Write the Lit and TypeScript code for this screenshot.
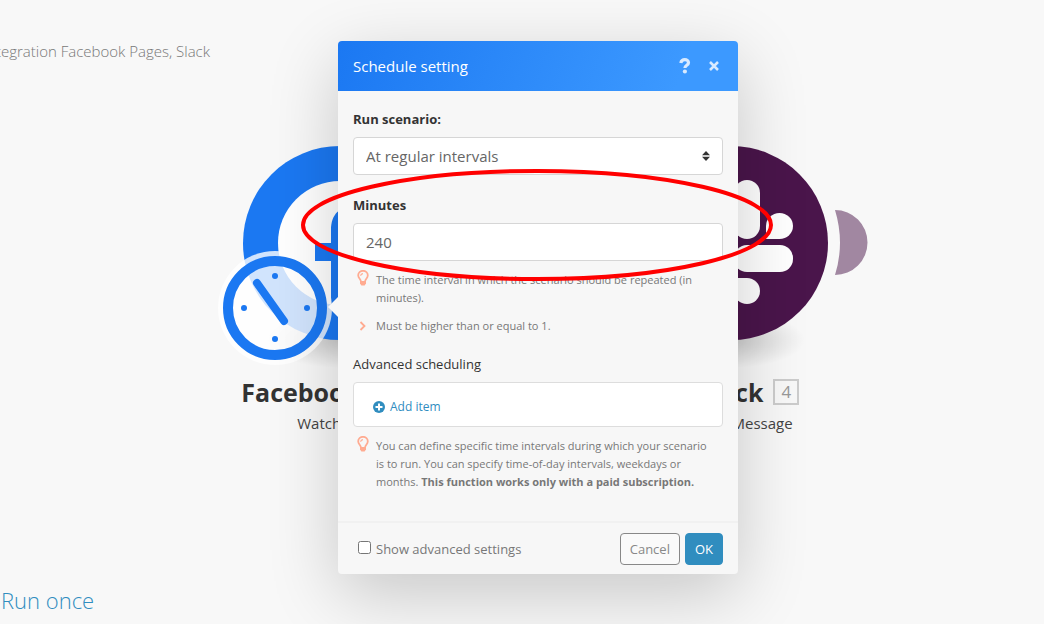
import { LitElement, html, css, svg } from "lit";
import { customElement, state } from "lit/decorators.js";

const bulb = svg`<svg class="bulb" viewBox="0 0 12 16" width="12" height="16" aria-hidden="true">
  <path d="M3.800 11C3.600 9 1.200 8.200 1.200 5.300A4.800 4.500 0 0 1 10.800 5.300C10.800 8.200 8.400 9 8.200 11" fill="none" stroke="currentColor" stroke-width="1.800"/>
  <path d="M3.600 5.800A2.500 2.500 0 0 1 6 3.600" fill="none" stroke="currentColor" stroke-width="1.200"/>
  <path d="M3 11h6v2.400L7.600 15.400H4.400L3 13.400Z" fill="currentColor"/>
</svg>`;

@customElement("scenario-canvas")
export class ScenarioCanvas extends LitElement {
  static styles = css`
    :host {
      display: block;
      position: absolute;
      inset: 0;
      overflow: hidden;
    }
    .node {
      position: absolute;
      top: 146px;
      width: 280px;
      display: flex;
      flex-direction: column;
      align-items: center;
      color: #333;
    }
    .facebook {
      left: calc(50% - 322px);
    }
    .slack {
      left: calc(50% + 69px);
    }
    .art {
      display: block;
      width: 280px;
      height: 229px;
      overflow: visible;
    }
    .name {
      display: flex;
      align-items: center;
      gap: 10px;
      margin: 0;
      font-size: 25px;
      line-height: 34px;
      font-weight: 700;
      white-space: nowrap;
    }
    .count {
      box-sizing: border-box;
      width: 26px;
      height: 26px;
      margin-right: -36px;
      border: 2px solid #ccc;
      color: #999;
      font-size: 17px;
      line-height: 22px;
      font-weight: 400;
      text-align: center;
    }
    .action {
      margin: 2px 0 0;
      font-size: 15px;
      line-height: 24px;
      color: #444;
      white-space: nowrap;
    }
  `;

  render() {
    return html`
      <section class="node facebook">
        <svg class="art" viewBox="0 0 280 229" aria-hidden="true">
          <defs>
            <radialGradient id="shade">
              <stop offset="0" stop-color="#000" stop-opacity=".18" />
              <stop offset="1" stop-color="#000" stop-opacity="0" />
            </radialGradient>
          </defs>
          <ellipse cx="140" cy="194" rx="74" ry="28" fill="url(#shade)" />
          <circle cx="140" cy="97" r="97" fill="#1b78f2" />
          <circle cx="140" cy="97" r="62" fill="#fff" />
          <path d="M115 97h16V84c0-16 9-24 24-24l14 1v16h-8c-8 0-11 4-11 10v10h18l-3 18h-15v46h-19v-46h-16z" fill="#1b78f2" />
          <circle cx="75" cy="162" r="57" fill="#fff" fill-opacity=".8" />
          <circle cx="75" cy="162" r="47" fill="none" stroke="#1b78f2" stroke-width="10" />
          <path d="M57 137 84 175" stroke="#1b78f2" stroke-width="8" stroke-linecap="round" />
          <g fill="#1b78f2">
            <circle cx="75" cy="130" r="3" /><circle cx="75" cy="193" r="3" />
            <circle cx="44" cy="162" r="3" /><circle cx="107" cy="162" r="3" />
          </g>
        </svg>
        <h2 class="name">Facebook Pages</h2>
        <p class="action">Watch Posts</p>
      </section>
      <section class="node slack">
        <svg class="art" viewBox="0 0 280 229" aria-hidden="true">
          <defs>
            <radialGradient id="shade">
              <stop offset="0" stop-color="#000" stop-opacity=".18" />
              <stop offset="1" stop-color="#000" stop-opacity="0" />
            </radialGradient>
          </defs>
          <ellipse cx="140" cy="194" rx="74" ry="28" fill="url(#shade)" />
          <circle cx="140" cy="97" r="97" fill="#4a154b" />
          <g fill="#fff">
            <rect x="143" y="34" width="26" height="59" rx="13" />
            <path d="M175 93V80a13.500 13 0 1 1 13.500 13z" />
            <rect x="143" y="99" width="59" height="27" rx="13" />
            <path d="M143 132h13a13 13 0 1 1-13 13z" />
            <rect x="111" y="99" width="26" height="59" rx="13" />
            <path d="M105 99v13a13 13 0 1 1-13-13z" />
            <rect x="78" y="67" width="59" height="26" rx="13" />
            <path d="M137 60h-13a13 13 0 1 1 13-13z" />
          </g>
          <path d="M244 64A32.500 32.500 0 0 1 244 129Q254 97 244 64Z" fill="#a187a1" />
        </svg>
        <h2 class="name">Slack <span class="count">4</span></h2>
        <p class="action">Create a Message</p>
      </section>
    `;
  }
}

@customElement("schedule-dialog")
export class ScheduleDialog extends LitElement {
  @state() private advanced = false;

  static styles = css`
    :host {
      display: block;
      position: relative;
      width: 400px;
      color: #333;
      background: #f7f7f7;
      border-radius: 4px;
      box-shadow: 0 20px 70px rgba(0, 0, 0, 0.2);
    }
    .arrow {
      position: absolute;
      left: -10px;
      top: 256px;
      width: 10px;
      height: 20px;
      background: #f7f7f7;
      clip-path: polygon(0 50%, 100% 0, 100% 100%);
    }
    .head {
      display: flex;
      align-items: center;
      height: 50px;
      padding: 0 15px;
      color: #fff;
      border-radius: 4px 4px 0 0;
      background: linear-gradient(110deg, #1b78f2, #3c99ff 85%);
    }
    .title {
      flex: 1;
      margin: 0;
      font-size: 15px;
      line-height: 24px;
      font-weight: 400;
    }
    .tool {
      width: 29px;
      height: 30px;
      padding: 0;
      border: 0;
      background: none;
      color: #d8eaff;
    }
    .tools {
      display: flex;
      margin-right: -5px;
    }
    .tool svg {
      display: block;
      margin: auto;
    }
    .body {
      padding: 16px 15px 30px;
    }
    .label {
      display: block;
      margin-bottom: 6px;
      font-size: 13px;
      line-height: 24px;
    }
    .strong {
      font-weight: 700;
    }
    .picker {
      display: grid;
      align-items: center;
      margin-bottom: 18px;
    }
    .picker > * {
      grid-area: 1 / 1;
    }
    .caret {
      justify-self: end;
      margin-right: 13px;
      pointer-events: none;
    }
    .field {
      box-sizing: border-box;
      display: block;
      width: 100%;
      height: 38px;
      padding: 0 12px;
      border: 1px solid #d6d6d6;
      border-radius: 4px;
      background: #fff;
      color: #666;
      font: inherit;
      font-size: 15px;
      appearance: none;
      outline: 0;
    }
    .hint {
      display: grid;
      grid-template-columns: 12px 1fr;
      column-gap: 7px;
      margin: 10px 8px 0 4px;
      font-size: 11px;
      line-height: 18px;
      color: #777;
    }
    .hint svg {
      color: #ffab91;
    }
    .hint p {
      margin: 0;
    }
    .bulb {
      margin-top: -1px;
    }
    .chevron {
      margin-top: 3px;
    }
    .advanced {
      margin: 17px 0 6px;
    }
    .items {
      box-sizing: border-box;
      display: flex;
      align-items: center;
      height: 45px;
      padding: 4px 19px 0;
      border: 1px solid #ddd;
      border-radius: 4px;
      background: #fff;
    }
    .add {
      display: flex;
      align-items: center;
      gap: 5px;
      padding: 0;
      border: 0;
      background: none;
      color: #308dbf;
      font: inherit;
      font-size: 12px;
      line-height: 18px;
    }
    .foot {
      display: flex;
      align-items: center;
      gap: 5px;
      padding: 10px 15px 9px;
      border-top: 2px solid #f1f1f1;
    }
    .check {
      flex: 1;
      display: flex;
      align-items: center;
      gap: 5px;
      padding-left: 5px;
      font-size: 13px;
      color: #777;
    }
    .box {
      box-sizing: border-box;
      width: 13px;
      height: 13px;
      margin: 0 0 3px;
    }
    .btn {
      box-sizing: border-box;
      height: 32px;
      padding: 0 9px;
      border: 1px solid #888;
      border-radius: 4px;
      background: #fafafa;
      color: #888;
      font: inherit;
      font-size: 13px;
    }
    .ok {
      border-color: #308dbf;
      background: #308dbf;
      color: #fff;
    }
  `;

  render() {
    return html`
      <span class="arrow"></span>
      <header class="head">
        <h1 class="title">Schedule setting</h1>
        <div class="tools">
          <button class="tool" aria-label="Help">
            <svg width="12" height="16" viewBox="0 0 12 16">
              <path d="M1.800 5C2.300 2.700 3.800 1.700 5.800 1.700S9.500 2.900 9.500 4.700C9.500 7.300 5.900 7.200 5.900 10" fill="none" stroke="currentColor" stroke-width="3.200" />
              <circle cx="5.900" cy="13.500" r="2.100" fill="currentColor" />
            </svg>
          </button>
          <button class="tool" aria-label="Close">
            <svg width="10" height="10" viewBox="0 0 10 10">
              <path d="M1 1l8 8M9 1L1 9" stroke="currentColor" stroke-width="2.500" />
            </svg>
          </button>
        </div>
      </header>
      <div class="body">
        <label class="label strong" for="mode">Run scenario:</label>
        <div class="picker">
          <select class="field" id="mode">
            <option>At regular intervals</option>
          </select>
          <svg class="caret" width="8" height="10" viewBox="0 0 8 10" aria-hidden="true">
            <path d="M0 4.200 4 0l4 4.200zM0 5.800h8L4 10z" fill="#333" />
          </svg>
        </div>
        <label class="label strong" for="minutes">Minutes</label>
        <input class="field" id="minutes" type="text" inputmode="numeric" value="240" />
        <div class="hint">
          ${bulb}
          <p>The time interval in which the scenario should be repeated (in minutes).</p>
        </div>
        <div class="hint">
          <svg class="chevron" width="12" height="12" viewBox="0 0 12 12" aria-hidden="true">
            <path d="M3.500 2l4 4-4 4" fill="none" stroke="currentColor" stroke-width="1.800" />
          </svg>
          <p>Must be higher than or equal to 1.</p>
        </div>
        <span class="label advanced">Advanced scheduling</span>
        <div class="items">
          <button class="add">
            <svg width="12" height="12" viewBox="0 0 12 12" aria-hidden="true">
              <circle cx="6" cy="6" r="6" fill="currentColor" />
              <path d="M6 2.500v7M2.500 6h7" stroke="#fff" stroke-width="2" />
            </svg>
            Add item
          </button>
        </div>
        <div class="hint">
          ${bulb}
          <p>
            You can define specific time intervals during which your scenario is to run. You can
            specify time-of-day intervals, weekdays or months.
            <b>This function works only with a paid subscription.</b>
          </p>
        </div>
      </div>
      <footer class="foot">
        <label class="check">
          <input
            class="box"
            type="checkbox"
            .checked=${this.advanced}
            @change=${() => (this.advanced = !this.advanced)}
          />
          Show advanced settings
        </label>
        <button class="btn">Cancel</button>
        <button class="btn ok">OK</button>
      </footer>
    `;
  }
}

@customElement("app-root")
export class AppRoot extends LitElement {
  static styles = css`
    :host {
      display: flex;
      flex-direction: column;
      justify-content: space-between;
      position: relative;
      box-sizing: border-box;
      min-height: 100vh;
      overflow: hidden;
      background: #f8f8f8;
      font-family: "Open Sans", "Noto Sans", sans-serif;
    }
    .crumb {
      display: flex;
      justify-content: flex-end;
      width: 210px;
      margin: 39px 0 0;
      font-size: 15px;
      line-height: 24px;
      font-weight: 300;
      color: #777;
      white-space: nowrap;
    }
    .run {
      align-self: flex-start;
      margin-bottom: 8px;
      padding: 0 1px;
      border: 0;
      background: none;
      color: #308dbf;
      font: inherit;
      font-size: 22px;
      line-height: 32px;
      font-weight: 300;
    }
    .overlay {
      position: absolute;
      inset: 0;
      display: flex;
      justify-content: center;
      align-items: flex-start;
      padding: 41px 0 0 32px;
    }
    .mark {
      position: absolute;
      left: calc(50% - 223px);
      top: 168px;
      width: 476px;
      height: 114px;
      pointer-events: none;
    }
  `;

  render() {
    return html`
      <scenario-canvas></scenario-canvas>
      <p class="crumb">Integration Facebook Pages, Slack</p>
      <button class="run">Run once</button>
      <div class="overlay"><schedule-dialog></schedule-dialog></div>
      <svg class="mark" viewBox="0 0 476 114" aria-hidden="true">
        <ellipse cx="238" cy="57" rx="234" ry="54" fill="none" stroke="#f00" stroke-width="4" />
      </svg>
    `;
  }
}
